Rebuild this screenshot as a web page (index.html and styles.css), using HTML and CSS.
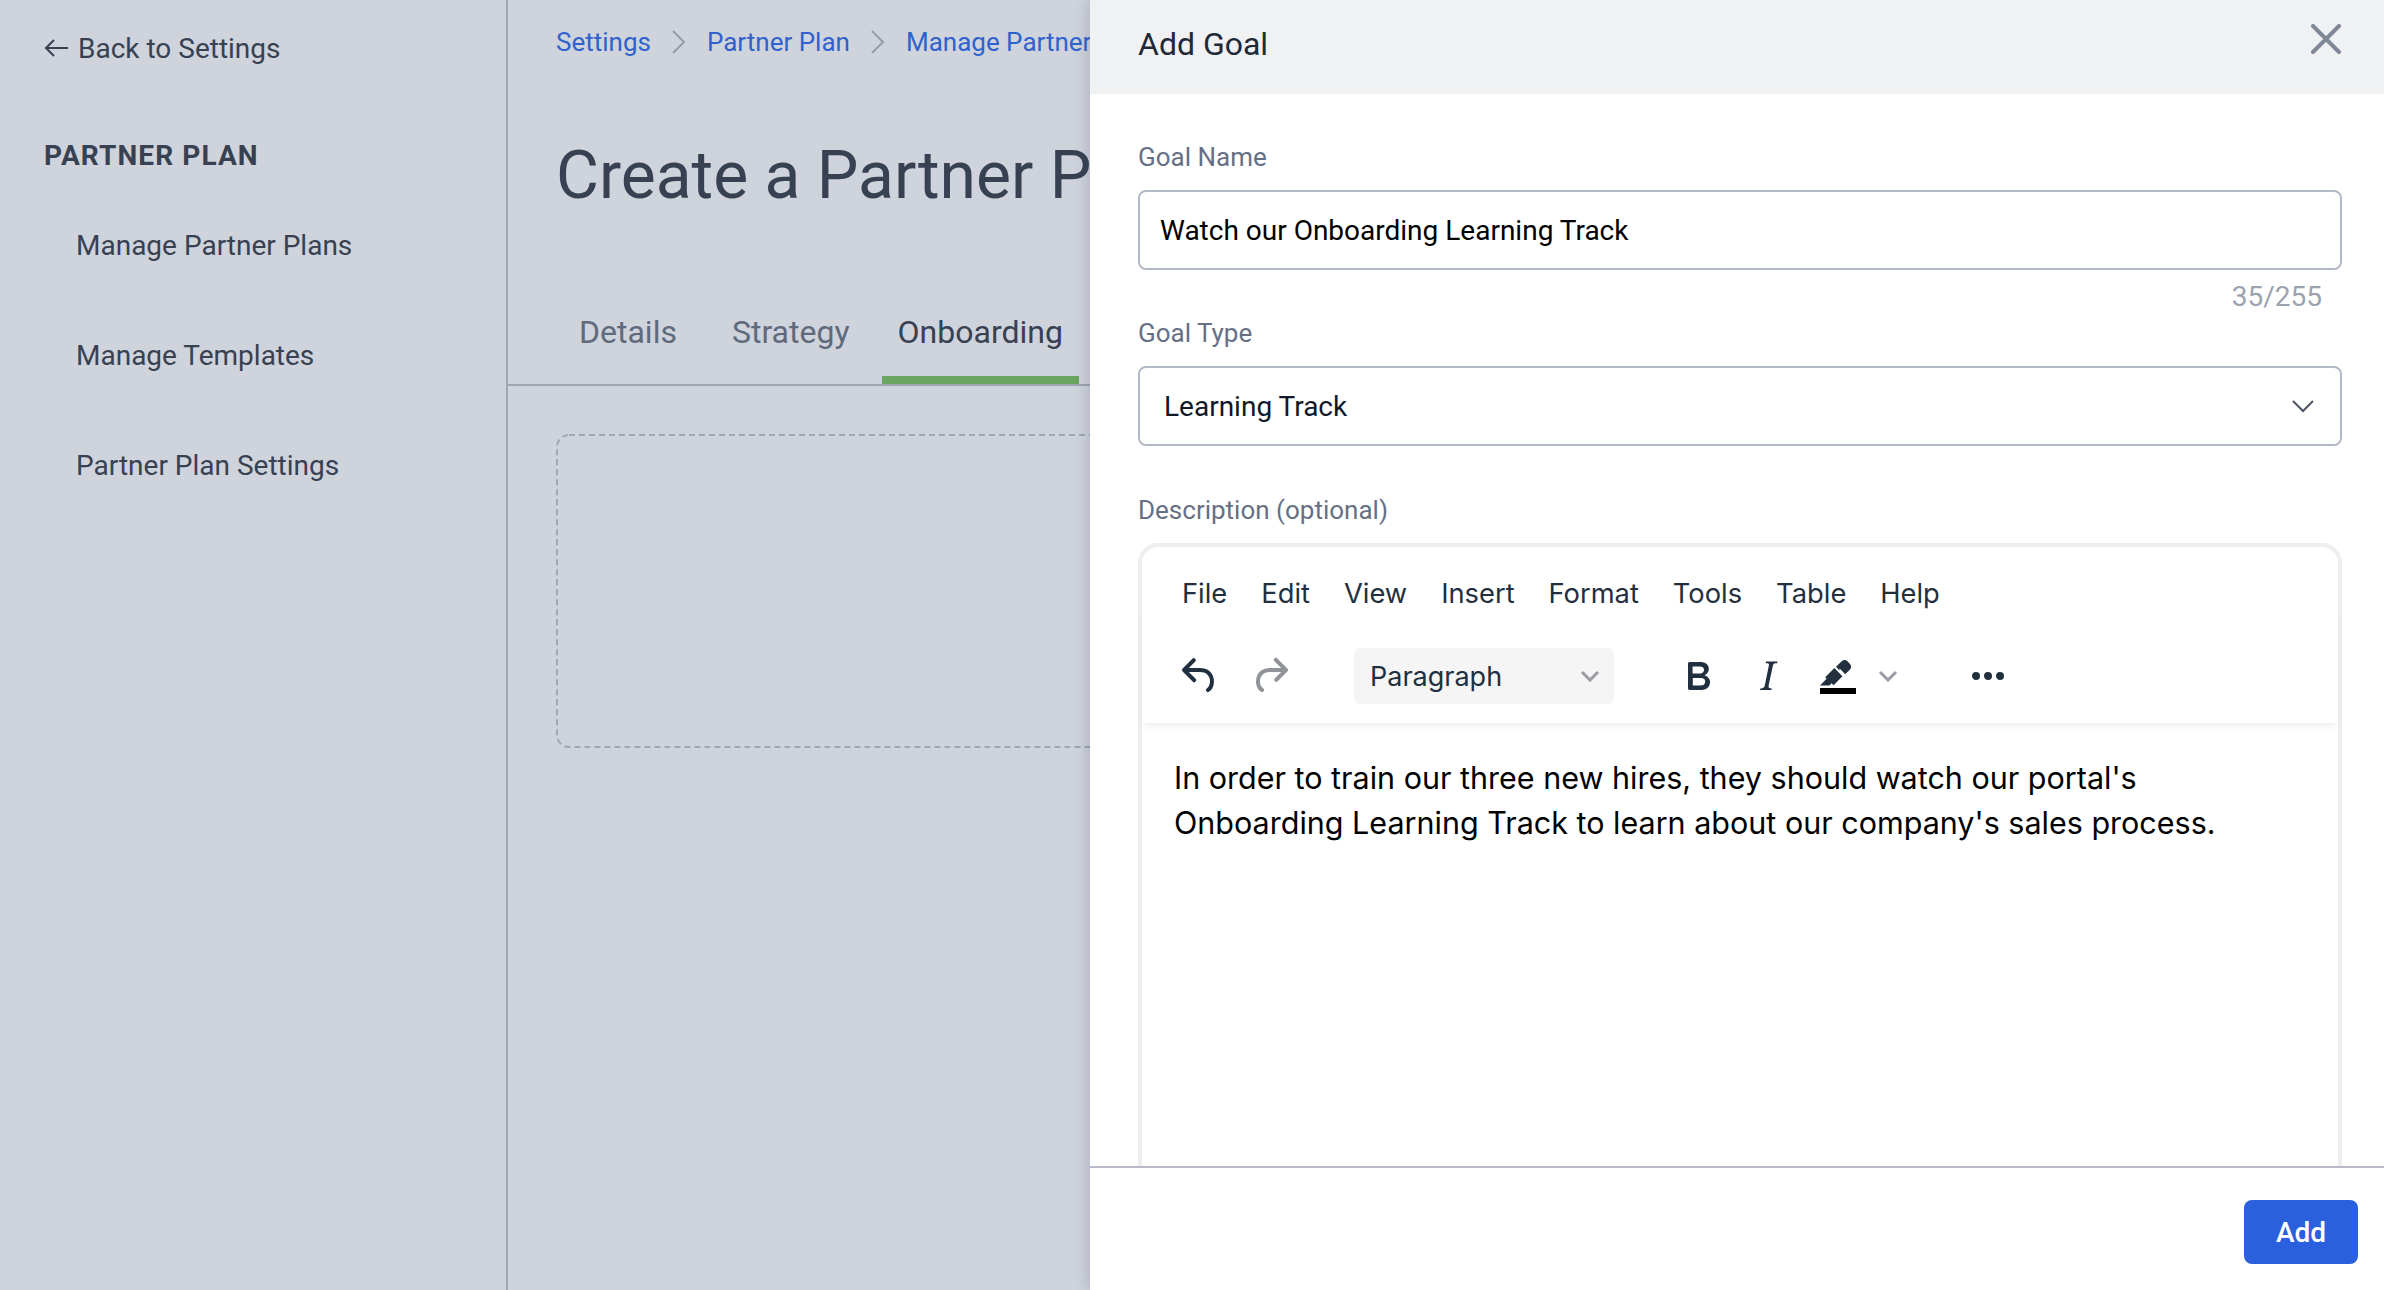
FILE: index.html
```html
<!DOCTYPE html>
<html lang="en">
<head>
  <meta charset="UTF-8">
  <title>Add Goal</title>
  <link rel="stylesheet" href="styles.css">
</head>
<body>
  <div class="sidebar">
    <a class="back">
      <svg class="back-icon" width="26" height="22" viewBox="0 0 26 22"><path d="M24 11H2M10 3l-8 8 8 8" fill="none" stroke="#374151" stroke-width="2"/></svg>
      Back to Settings
    </a>
    <h3>PARTNER PLAN</h3>
    <a class="side-link">Manage Partner Plans</a>
    <a class="side-link">Manage Templates</a>
    <a class="side-link">Partner Plan Settings</a>
  </div>

  <div class="main">
    <div class="breadcrumb">
      <a>Settings</a>
      <svg width="16" height="26" viewBox="0 0 16 26"><path d="M2 2l11 11L2 24" fill="none" stroke="#969cab" stroke-width="2"/></svg>
      <a>Partner Plan</a>
      <svg width="16" height="26" viewBox="0 0 16 26"><path d="M2 2l11 11L2 24" fill="none" stroke="#969cab" stroke-width="2"/></svg>
      <a>Manage Partner Plans</a>
    </div>
    <h1>Create a Partner Plan</h1>
    <div class="tabs">
      <a class="tab">Details</a>
      <a class="tab">Strategy</a>
      <a class="tab active">Onboarding</a>
    </div>
    <svg class="dashed-box" width="904" height="314" viewBox="0 0 904 314"><rect x="1" y="1" width="902" height="312" rx="12" fill="none" stroke="#a0a6b4" stroke-width="2" stroke-dasharray="6 4"/></svg>
  </div>

  <div class="drawer">
    <div class="drawer-header">
      <span>Add Goal</span>
      <svg class="close" width="30" height="30" viewBox="0 0 30 30"><path d="M2 2l26 26M28 2L2 28" fill="none" stroke="#808897" stroke-width="4" stroke-linecap="round"/></svg>
    </div>

    <div class="drawer-body">
      <label>Goal Name</label>
      <div class="field name-field">Watch our Onboarding Learning Track</div>
      <div class="counter">35/255</div>

      <label>Goal Type</label>
      <div class="field type-field">
        Learning Track
        <svg width="24" height="14" viewBox="0 0 24 14"><path d="M2 2l10 10L22 2" fill="none" stroke="#4b5563" stroke-width="2"/></svg>
      </div>

      <label class="desc-label">Description (optional)</label>
      <div class="editor">
        <div class="menubar">
          <span>File</span>
          <span>Edit</span>
          <span>View</span>
          <span>Insert</span>
          <span>Format</span>
          <span>Tools</span>
          <span>Table</span>
          <span>Help</span>
        </div>
        <div class="toolbar">
          <svg class="icon" viewBox="0 0 24 24"><path d="M6.4 8H12c3.7 0 6.2 2 6.8 5.1.6 2.7-.4 5.6-2.3 6.8a1 1 0 0 1-1-1.8c1.1-.6 1.8-2.7 1.4-4.6-.5-2.1-2.1-3.5-4.9-3.5H6.4l3.3 3.3a1 1 0 1 1-1.4 1.4l-5-5a1 1 0 0 1 0-1.4l5-5a1 1 0 0 1 1.4 1.4L6.4 8Z"/></svg>
          <svg class="icon redo" viewBox="0 0 24 24"><path d="M17.6 10H12c-2.8 0-4.4 1.4-4.9 3.5-.4 2 .3 4 1.4 4.6a1 1 0 1 1-1 1.8c-2-1.2-2.9-4.1-2.3-6.8.6-3 3-5.1 6.8-5.1h5.6l-3.3-3.3a1 1 0 1 1 1.4-1.4l5 5a1 1 0 0 1 0 1.4l-5 5a1 1 0 0 1-1.4-1.4l3.3-3.3Z"/></svg>
          <div class="block-select">
            Paragraph
            <svg width="20" height="12" viewBox="0 0 20 12"><path d="M2 2l8 8 8-8" fill="none" stroke="#9a9da3" stroke-width="3"/></svg>
          </div>
          <svg class="icon bold" viewBox="0 0 24 24"><path d="M7.8 19c-.3 0-.5 0-.6-.2l-.2-.5V5.7c0-.2 0-.4.2-.5l.6-.2h5c1.5 0 2.7.3 3.5 1 .7.6 1.1 1.4 1.1 2.5a3 3 0 0 1-.6 1.9c-.4.6-1 1-1.6 1.2.4.1.9.3 1.3.6s.8.7 1 1.2c.4.4.5 1 .5 1.6 0 1.3-.4 2.3-1.3 3-.8.7-2.1 1-3.8 1H7.8Zm5-8.3c.6 0 1.2-.1 1.6-.5.4-.3.6-.7.6-1.3 0-1.1-.8-1.7-2.3-1.7H9.3v3.5h3.4Zm.5 6c.7 0 1.3-.1 1.7-.4.4-.4.6-.9.6-1.5s-.2-1-.7-1.4c-.4-.3-1-.4-2-.4H9.4v3.8h4Z"/></svg>
          <svg class="icon italic" viewBox="0 0 24 24"><path d="M16.7 4.7l-.1.9h-.3c-.6 0-1 0-1.4.3-.3.3-.4.6-.5 1.1l-2.1 9.8v.6c0 .5.4.8 1.4.8h.2l-.2.8H8l.2-.8h.2c1.1 0 1.8-.5 2-1.5l2-9.8.1-.5c0-.6-.4-.8-1.4-.8h-.3l.2-.9h5.8Z"/></svg>
          <svg class="icon highlight" viewBox="0 0 24 24"><path class="bar" d="M3 18h18v3H3z"/><path d="M7.7 16.7H3l3.3-3.3-.7-.8L10.2 8l4 4.1-4 4.2c-.2.2-.6.2-.8 0l-.6-.7-1.1 1.1zm5-7.5L11 7.4l3-2.9a2 2 0 0 1 2.6 0L18 6c.7.7.7 2 0 2.7l-2.4 2.4-.8-.8-2-2.1z"/></svg>
          <svg class="small-chevron" width="20" height="12" viewBox="0 0 20 12"><path d="M2 2l8 8 8-8" fill="none" stroke="#9a9da3" stroke-width="3"/></svg>
          <svg class="icon more" viewBox="0 0 24 24"><path d="M6 10a2 2 0 0 0-2 2c0 1.1.9 2 2 2a2 2 0 0 0 2-2 2 2 0 0 0-2-2Zm12 0a2 2 0 0 0-2 2c0 1.1.9 2 2 2a2 2 0 0 0 2-2 2 2 0 0 0-2-2Zm-6 0a2 2 0 0 0-2 2c0 1.1.9 2 2 2a2 2 0 0 0 2-2 2 2 0 0 0-2-2Z"/></svg>
        </div>
        <div class="editor-text">
          In order to train our three new hires, they should watch our portal's<br>
          Onboarding Learning Track to learn about our company's sales process.
        </div>
      </div>
    </div>

    <div class="drawer-footer">
      <button>Add</button>
    </div>
  </div>
</body>
</html>
```

FILE: styles.css
```css
body {
  font-family: Roboto, Arial, sans-serif;
  margin: 0;
  display: flex;
  height: 1290px;
  overflow: hidden;
  background-color: #cfd3dc;
  color: #374151;
}
.sidebar {
  width: 462px;
  flex-shrink: 0;
  border-right: 2px solid #9fa5b3;
  padding: 30px 0 0 44px;
}
.back {
  display: flex;
  align-items: center;
  height: 36px;
  font-size: 28px;
}
.back-icon {
  margin-right: 8px;
}
.sidebar h3 {
  margin: 0;
  padding-top: 73px;
  height: 52px;
  line-height: 34px;
  font-size: 28px;
  font-weight: 700;
  letter-spacing: 1.1px;
}
.side-link {
  display: block;
  height: 110px;
  line-height: 110px;
  padding-left: 32px;
  font-size: 28px;
}
.main {
  flex: 1;
  min-width: 0;
}
.breadcrumb {
  display: flex;
  align-items: center;
  gap: 20px;
  height: 34px;
  margin: 25px 0 0 48px;
  font-size: 26px;
  white-space: nowrap;
}
.breadcrumb a {
  color: #2f62cc;
}
h1 {
  margin: 75px 0 0 48px;
  height: 84px;
  line-height: 84px;
  font-size: 66px;
  font-weight: 400;
  white-space: nowrap;
}
.tabs {
  display: flex;
  gap: 23px;
  height: 92px;
  margin-top: 74px;
  padding-left: 55px;
  border-bottom: 2px solid #9fa5b3;
}
.tab {
  padding: 0 16px;
  height: 84px;
  line-height: 80px;
  font-size: 32px;
  color: #5f6a7d;
}
.tab.active {
  margin-left: -7px;
  color: #374151;
  border-bottom: 8px solid #6ca663;
  border-radius: 4px 4px 0 0;
}
.dashed-box {
  display: block;
  margin: 48px 0 0 48px;
}

/* drawer sits over the page */
.drawer {
  position: absolute;
  top: 0;
  right: 0;
  bottom: 0;
  width: 1294px;
  display: flex;
  flex-direction: column;
  background: #fff;
  box-shadow: -4px 0 12px rgba(60, 66, 85, 0.18);
}
.drawer-header {
  display: flex;
  justify-content: space-between;
  align-items: center;
  height: 94px;
  flex-shrink: 0;
  padding: 0 43px 0 48px;
  box-sizing: border-box;
  background: #f0f1f3;
  font-size: 32px;
  color: #1f2937;
}
.drawer-header span {
  margin-bottom: 6px;
}
.close {
  margin-bottom: 16px;
}
.drawer-body {
  flex: 1;
  min-height: 0;
  overflow: hidden;
  padding: 47px 42px 0 48px;
}
label {
  display: block;
  height: 32px;
  line-height: 32px;
  margin-bottom: 17px;
  font-size: 26px;
  color: #667085;
}
.field {
  display: flex;
  align-items: center;
  height: 80px;
  box-sizing: border-box;
  border: 2px solid #b3b8c6;
  border-radius: 8px;
  font-size: 28px;
  color: #000;
}
.name-field {
  padding-left: 20px;
}
.type-field {
  justify-content: space-between;
  padding: 0 25px 0 24px;
  color: #111827;
}
.counter {
  height: 32px;
  line-height: 32px;
  margin-top: 11px;
  margin-bottom: 4px;
  padding-right: 20px;
  text-align: right;
  font-size: 28px;
  color: #9ca3af;
}
.desc-label {
  margin-top: 48px;
}
.editor {
  height: 760px;
  box-sizing: border-box;
  border: 4px solid #eeeeee;
  border-radius: 20px;
  font-family: Inter, Arial, sans-serif;
  color: #222f3e;
}
.menubar {
  display: flex;
  gap: 34px;
  padding: 28px 0 0 40px;
  height: 38px;
  line-height: 38px;
  font-size: 27.3px;
}
.toolbar {
  display: flex;
  align-items: center;
  height: 110px;
  padding: 16px 0 0 34px;
  box-sizing: border-box;
  box-shadow: 0 4px 8px -2px rgba(34, 47, 62, 0.1);
}
.icon {
  width: 48px;
  height: 48px;
  fill: #222f3e;
  flex-shrink: 0;
}
.redo {
  fill: #909398;
  margin-left: 22px;
}
.block-select {
  display: flex;
  align-items: center;
  justify-content: space-between;
  width: 260px;
  height: 56px;
  margin-left: 60px;
  padding: 0 14px 0 16px;
  box-sizing: border-box;
  background: #f5f5f5;
  border-radius: 6px;
  font-size: 27px;
}
.bold {
  margin-left: 60px;
}
.italic {
  margin-left: 22px;
}
.highlight {
  margin-left: 22px;
}
.highlight .bar {
  fill: #000;
}
.small-chevron {
  margin-left: 16px;
}
.more {
  margin-left: 66px;
}
.editor-text {
  padding: 32px 0 0 32px;
  line-height: 45px;
  font-size: 30.5px;
  color: #000;
}
.drawer-footer {
  flex-shrink: 0;
  height: 124px;
  box-sizing: border-box;
  border-top: 2px solid #b8bbc9;
  padding: 32px 26px 0 0;
  display: flex;
  justify-content: flex-end;
  background: #fff;
}
.drawer-footer button {
  width: 114px;
  height: 64px;
  border: none;
  border-radius: 8px;
  background-color: #2a60dd;
  color: #fff;
  font-family: Roboto, Arial, sans-serif;
  font-size: 28px;
  font-weight: 500;
}
```
